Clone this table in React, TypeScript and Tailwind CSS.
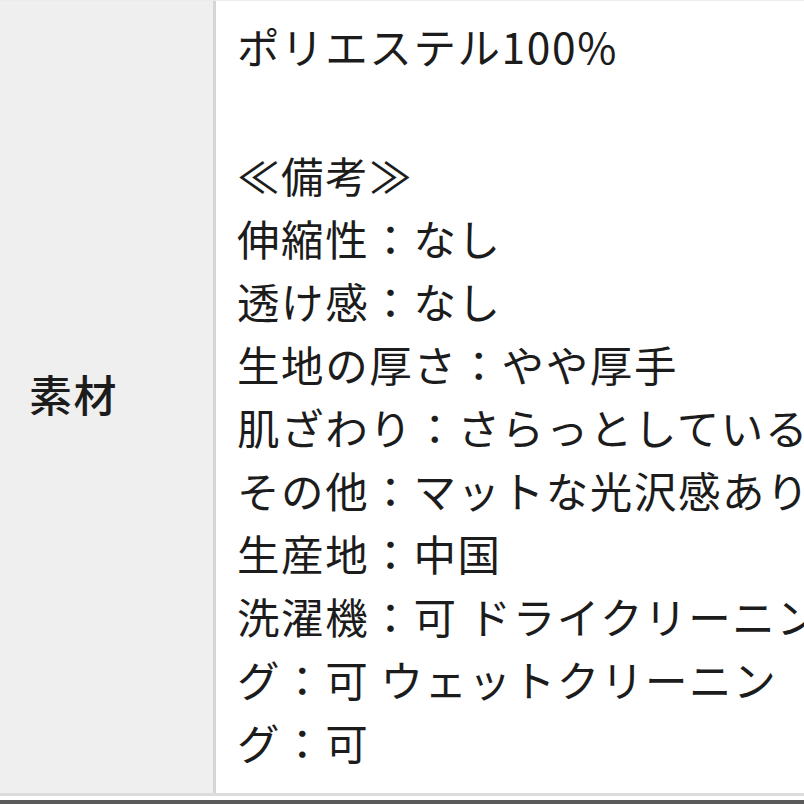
import React from "react";

const lines = [
  "≪備考≫",
  "伸縮性：なし",
  "透け感：なし",
  "生地の厚さ：やや厚手",
  "肌ざわり：さらっとしている",
  "その他：マットな光沢感あり",
  "生産地：中国",
  "洗濯機：可 ドライクリーニング",
  "グ：可 ウェットクリーニン",
  "グ：可",
];

export default function App() {
  return (
    <div
      className="w-[804px] h-[804px] overflow-hidden bg-white flex flex-col text-[#1c1c1c]"
      style={{ fontFamily: '"Noto Sans CJK JP", "Noto Sans", sans-serif' }}
    >
      <div className="flex flex-1 border-t border-[#ececec]">
        <div className="w-[213px] shrink-0 bg-[#efefef] flex items-center pl-[29px] pb-[8px]">
          <span className="text-[43px] leading-none font-medium tracking-[1.5px]">素材</span>
        </div>
        <div className="w-[3px] shrink-0 bg-[#d6d6d6]" />
        <div className="flex-1 overflow-hidden pl-[21px] pt-[13px]">
          <div className="whitespace-nowrap text-[42.5px] leading-[63px] tracking-[1.6px]">
            <div>ポリエステル100%</div>
            <div className="h-[66px]" />
            {lines.map((l, i) => (
              <div key={i}>{l}</div>
            ))}
          </div>
        </div>
      </div>
      <div className="h-[3px] bg-[#dcdcdc] shrink-0" />
      <div className="h-[4px] bg-white shrink-0" />
      <div className="h-[4px] bg-[#5a5a5a] shrink-0" />
    </div>
  );
}
